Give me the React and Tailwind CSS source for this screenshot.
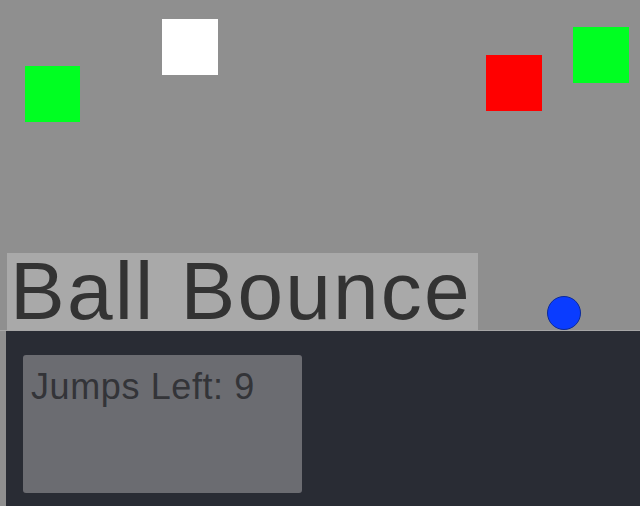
import React from "react";

export default function App() {
  const font = { fontFamily: '"Liberation Sans", Arial, sans-serif' };
  return (
    <div className="w-[640px] h-[506px] bg-[#8f8f8f] flex flex-col overflow-hidden" style={font}>
      <div className="relative h-[253px] shrink-0">
        <div className="absolute left-[25px] top-[66px] w-[55px] h-[56px] bg-[#00ff22]" />
        <div className="absolute left-[162px] top-[19px] w-[56px] h-[56px] bg-white" />
        <div className="absolute left-[486px] top-[55px] w-[56px] h-[56px] bg-[#ff0000]" />
        <div className="absolute left-[573px] top-[27px] w-[56px] h-[56px] bg-[#00ff22]" />
        <div className="absolute left-[547px] top-[296px] w-[34px] h-[34px] rounded-full bg-[#0a3cff] border border-[#0b2a9a] z-10" />
      </div>
      <div className="h-[77px] shrink-0 flex">
        <div className="ml-[7px] w-[471px] h-full bg-[#a9a9a9] flex items-start">
          <span className="pl-[3px] -mt-[3px] text-[82px] leading-none text-[#333333] tracking-[2.2px] whitespace-nowrap">
            Ball Bounce
          </span>
        </div>
      </div>
      <div className="h-[1px] bg-[#a6a6a6] shrink-0" />
      <div className="ml-[6px] flex-1 bg-[#292c34] pt-[24px] pl-[17px]">
        <div className="w-[279px] h-[138px] bg-[#6b6c71] rounded-[3px] pl-[8px] pt-[14px]">
          <span className="text-[36px] leading-none text-[#333438] tracking-[0.6px] whitespace-nowrap">
            Jumps Left: 9
          </span>
        </div>
      </div>
    </div>
  );
}
